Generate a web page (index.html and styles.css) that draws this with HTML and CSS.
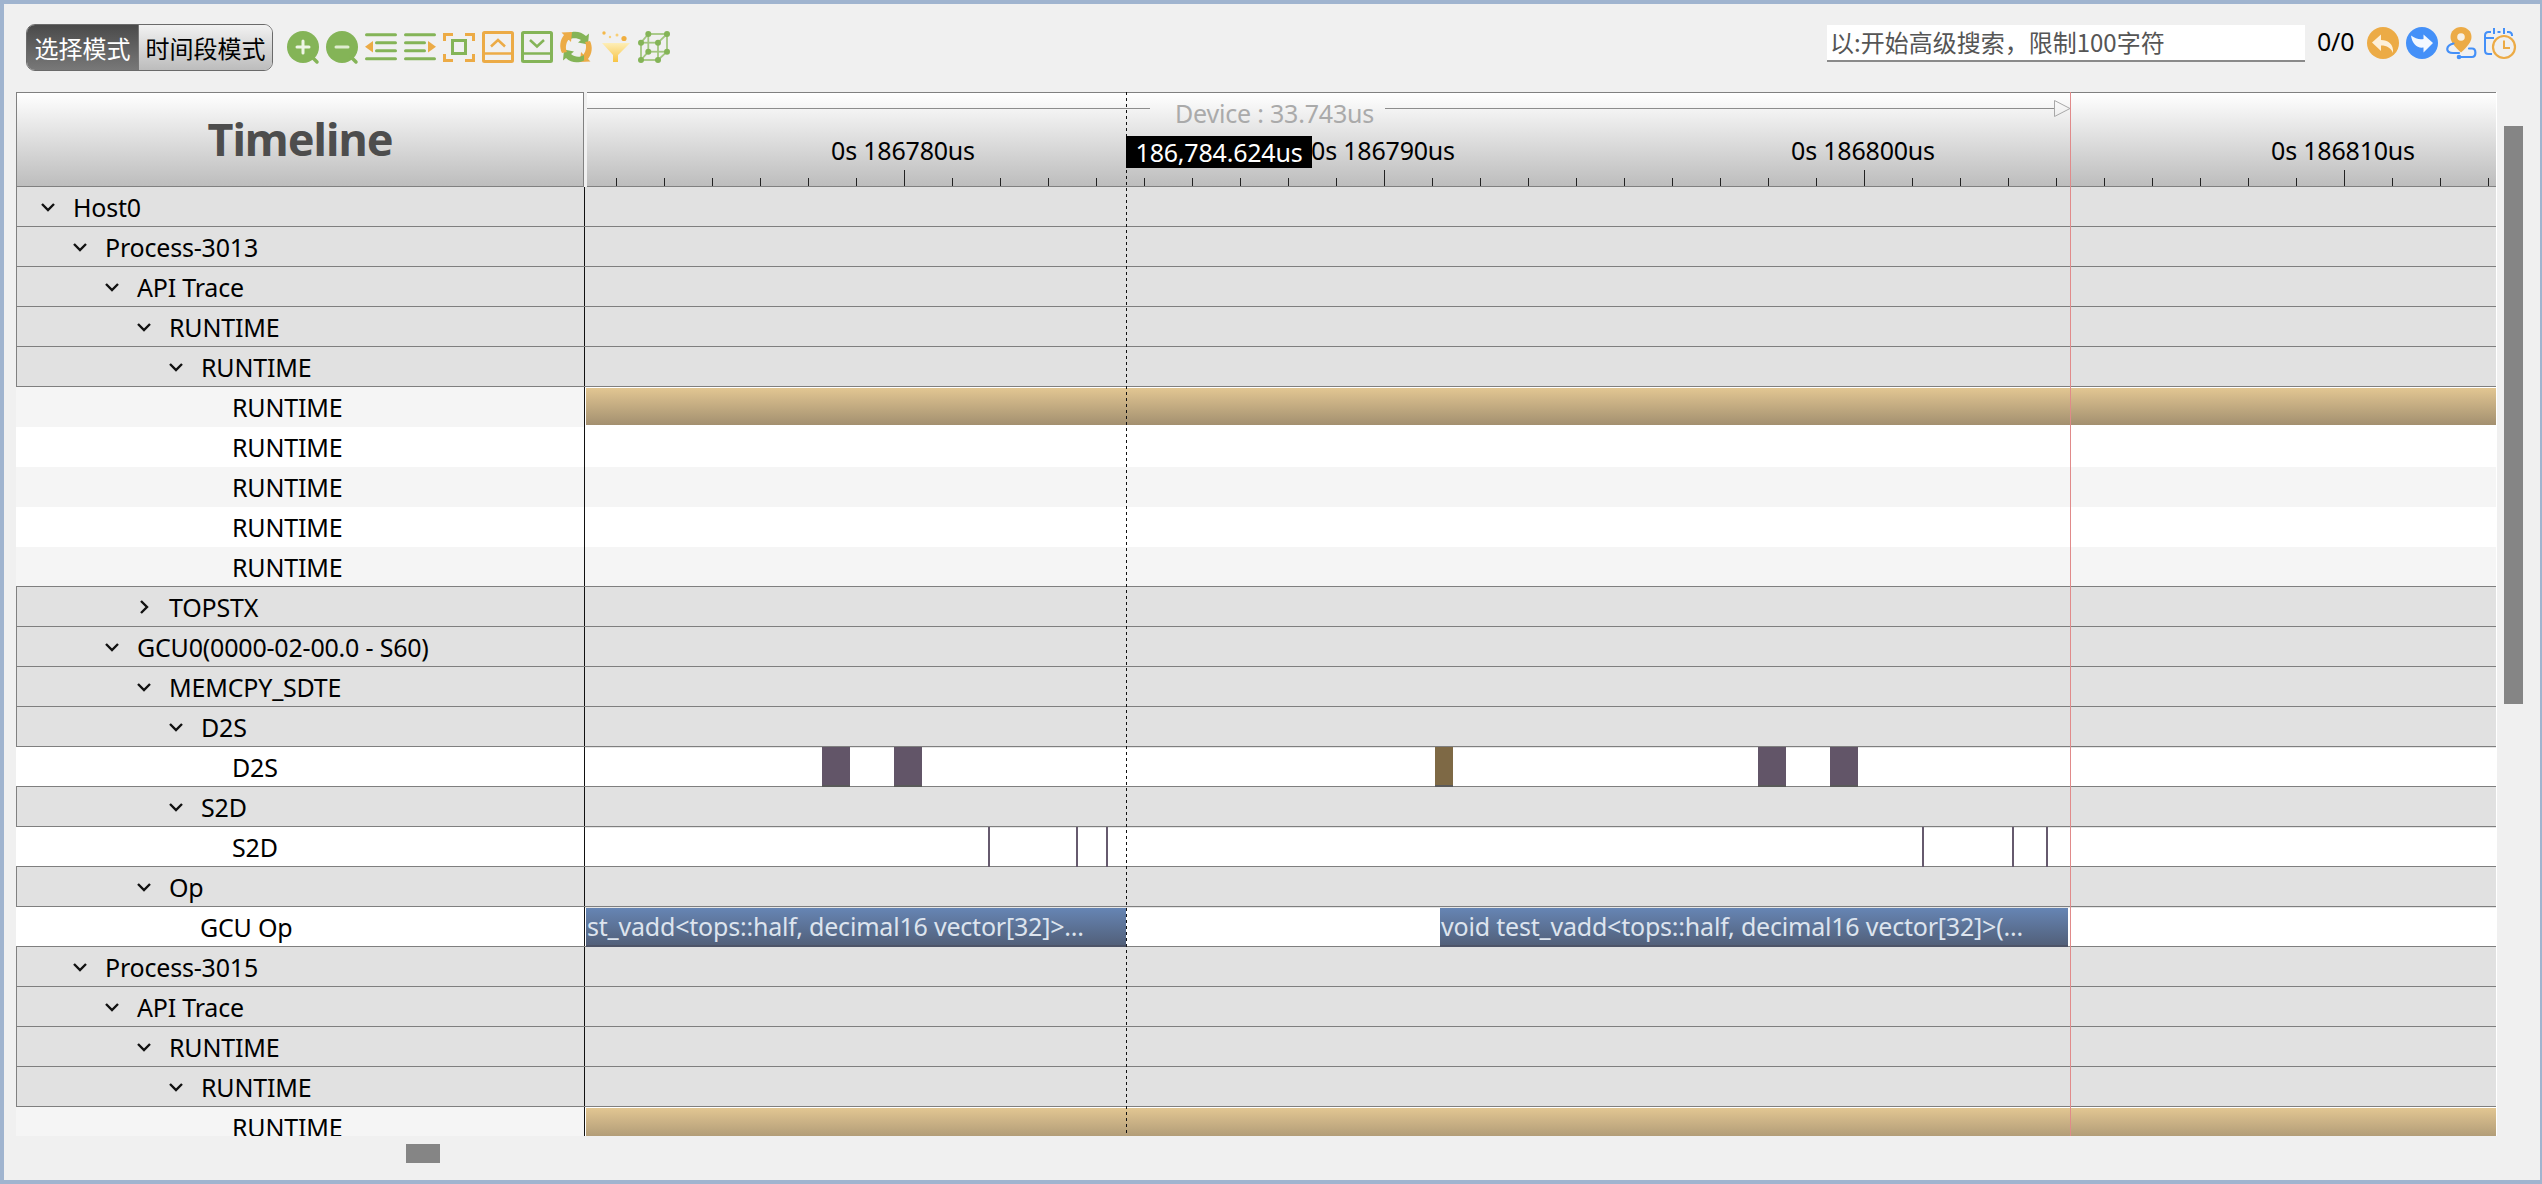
FILE: index.html
```html
<!DOCTYPE html>
<html lang="zh">
<head>
<meta charset="utf-8">
<title>Timeline</title>
<link rel="stylesheet" href="styles.css">
</head>
<body>
<div class="window">
  <header class="toolbar">
    <div class="mode-switch">
      <button class="mode mode-on">选择模式</button>
      <button class="mode mode-off">时间段模式</button>
    </div>
    <div class="tools">
      <svg class="ic" viewBox="0 0 32 32"><circle cx="16" cy="16" r="16" fill="#84b457"/><path d="M25 26l5 5" stroke="#84b457" stroke-width="3.5" stroke-linecap="round"/><path d="M10 16h12M16 10v12" stroke="#eef5e6" stroke-width="3" stroke-linecap="round"/></svg>
      <svg class="ic" viewBox="0 0 32 32"><circle cx="16" cy="16" r="16" fill="#84b457"/><path d="M25 26l5 5" stroke="#84b457" stroke-width="3.5" stroke-linecap="round"/><path d="M10 16h12" stroke="#dfeccf" stroke-width="3" stroke-linecap="round"/></svg>
      <svg class="ic" viewBox="0 0 32 32"><path d="M1.500 3.700h29M11.500 11.700h19M11.500 19.700h19M1.500 27.700h29" stroke="#84b457" stroke-width="3" stroke-linecap="round"/><path d="M0 15.700 8 10v11.500z" fill="#ecab46"/></svg>
      <svg class="ic" viewBox="0 0 32 32"><path d="M1.500 3.700h29M1.500 11.700h19M1.500 19.700h19M1.500 27.700h29" stroke="#84b457" stroke-width="3" stroke-linecap="round"/><path d="M32 15.700 24 10v11.500z" fill="#ecab46"/></svg>
      <svg class="ic" viewBox="0 0 32 32"><path d="M1.500 10V3.500H10M22 3.500h8.500V10M1.500 23v6.500H10M22 29.500h8.500V23" fill="none" stroke="#ecab46" stroke-width="3"/><rect x="9.500" y="9.500" width="13" height="13" fill="none" stroke="#84b457" stroke-width="3"/></svg>
      <svg class="ic" viewBox="0 0 32 32"><rect x="1.500" y="1.500" width="29" height="29" rx="1" fill="none" stroke="#ecab46" stroke-width="3"/><path d="M1.500 22.500h29" stroke="#ecab46" stroke-width="2.500"/><path d="M9 15.500l7-6.500 7 6.500" fill="none" stroke="#ecab46" stroke-width="2.500"/></svg>
      <svg class="ic" viewBox="0 0 32 32"><rect x="1.500" y="1.500" width="29" height="29" rx="1" fill="none" stroke="#84b457" stroke-width="3"/><path d="M1.500 22.500h29" stroke="#84b457" stroke-width="2.500"/><path d="M9 9l7 6.500L23 9" fill="none" stroke="#84b457" stroke-width="2.500"/></svg>
      <svg class="ic" viewBox="0 0 32 32"><path d="M8 2.500C14 -.5 21 .5 26 5l3-2.500-1 11-10-2 3-2.500C17 6.500 12 6.500 8 9z" fill="#84b457"/><path d="M30 10c3 6 2 13-2 18l2.500 2.500L20 31l1-10 2.500 2.500C26 20 27 15 25 11z" fill="#ecab46"/><path d="M24 29.500C18 32.500 11 32 6 27l-3 2.500 1-11 10 2-3 2.500c4 3.500 9 3.500 13 1z" fill="#84b457"/><path d="M2 22C-1 16 0 9 4 4L1.500 1.500 12 1l-1 10-2.500-2.500C6 12 5 17 7 21z" fill="#ecab46"/></svg>
      <svg class="ic" viewBox="0 0 32 32"><defs><linearGradient id="fun" x1="0" y1="0" x2="0" y2="1"><stop offset="0" stop-color="#fdeeb8"/><stop offset="1" stop-color="#f8c443"/></linearGradient></defs><path d="M3 12h28L19 24v7h-5v-7z" fill="url(#fun)"/><circle cx="5" cy="2" r="1.700" fill="#f4b84a"/><circle cx="11" cy="6" r="1.200" fill="#f8cf75"/><circle cx="18" cy="4" r="1.500" fill="#f8cf75"/><circle cx="25" cy="7.500" r="2.600" fill="#f0ae3e"/></svg>
      <svg class="ic" viewBox="0 0 32 32"><g fill="none" stroke="#a2c67f" stroke-width="1.800"><rect x="3" y="11.700" width="17" height="17.300"/><rect x="10.300" y="3" width="18.700" height="17.700"/><path d="M3 11.700 10.300 3M20 11.700 29 3M3 29l7.300-8.300M20 29l9-8.300"/></g><g fill="#84b457"><circle cx="3" cy="11.700" r="3"/><circle cx="20" cy="11.700" r="3"/><circle cx="3" cy="29" r="3"/><circle cx="20" cy="29" r="3"/><circle cx="10.300" cy="3" r="3"/><circle cx="29" cy="3" r="3"/><circle cx="10.300" cy="20.700" r="3"/><circle cx="29" cy="20.700" r="3"/></g></svg>
    </div>
    <div class="search">
      <div class="search-box">以:开始高级搜索，限制100字符</div>
      <span class="count">0/0</span>
      <svg class="ic ic-prev" viewBox="0 0 32 32"><circle cx="16" cy="16" r="16" fill="#ecab46"/><path d="M5 15.500 14 7.500v5.500c7 0 13 4 12 13-2-5-6-7.500-12-7.500v5.500z" fill="#fdf0da"/></svg>
      <svg class="ic ic-next" viewBox="0 0 32 32"><circle cx="16" cy="16" r="16" fill="#4490f8"/><path d="M27 16 17.500 7.500V12c-4 1-8.500-.5-12.500-3.500 1 8 6 13 12.500 12v5z" fill="#f3f8ff"/></svg>
      <svg class="ic ic-pin" viewBox="0 0 32 32"><path d="M16 0c6 0 10.500 4.400 10.500 10 0 5-4.500 10-10.500 15.500C10 20 5.500 15 5.500 10 5.500 4.400 10 0 16 0z" fill="#ecab46"/><circle cx="16" cy="10" r="3.800" fill="#f7f1e6"/><path d="M8.500 16.500C.5 18.500 0 26 8 26h6M24 21.500h3c4.500 0 4.500 8.500 0 8.500H14" fill="none" stroke="#4490f8" stroke-width="2.200" stroke-linecap="round"/><circle cx="14" cy="30" r="2.300" fill="#4490f8"/></svg>
      <svg class="ic ic-cal" viewBox="0 0 32 32"><path d="M7 5H4.500Q1 5 1 8.500v15Q1 27 4.500 27H8M13.500 5h3M23 5h1.500Q28 5 28 8.500V9M1 11h9M10 1v6M20 1v6" fill="none" stroke="#4490f8" stroke-width="2"/><circle cx="20" cy="20" r="11" fill="#f0f0f0" stroke="#ecab46" stroke-width="2.200"/><path d="M20 13.500V21h6" fill="none" stroke="#ecab46" stroke-width="2"/></svg>
    </div>
  </header>

  <div class="workspace">
    <main class="timeline">
      <div class="head">
        <div class="title">Timeline</div>
        <div class="ruler">
          <svg class="span-arrow" width="1909" height="95" viewBox="587 92 1909 95">
            <path d="M587 108.500H1150M1385 108.500H2055" stroke="#8c8c8c" stroke-width="1"/>
            <path d="M2054.500 100.500 2070 108.500 2054.500 116.500z" fill="none" stroke="#a8a8a8" stroke-width="1"/>
            <path class="tick-marks" d="M616.500 178V186M664.500 178V186M712.500 178V186M760.500 178V186M808.500 178V186M856.500 178V186M904.500 170V186M952.500 178V186M1000.500 178V186M1048.500 178V186M1096.500 178V186M1144.500 178V186M1192.500 178V186M1240.500 178V186M1288.500 178V186M1336.500 178V186M1384.500 170V186M1432.500 178V186M1480.500 178V186M1528.500 178V186M1576.500 178V186M1624.500 178V186M1672.500 178V186M1720.500 178V186M1768.500 178V186M1816.500 178V186M1864.500 170V186M1912.500 178V186M1960.500 178V186M2008.500 178V186M2056.500 178V186M2104.500 178V186M2152.500 178V186M2200.500 178V186M2248.500 178V186M2296.500 178V186M2344.500 170V186M2392.500 178V186M2440.500 178V186M2488.500 178V186"/>
          </svg>
          <span class="span-label">Device : 33.743us</span>
          <span class="tick-label" style="left:316px">0s 186780us</span>
          <span class="tick-label" style="left:796px">0s 186790us</span>
          <span class="tick-label" style="left:1276px">0s 186800us</span>
          <span class="tick-label" style="left:1756px">0s 186810us</span>
        </div>
      </div>

      <div class="row group"><div class="label l0"><svg class="chev" viewBox="0 0 14 8"><path d="M1 1l6 6 6-6"/></svg>Host0</div><div class="track"></div></div>
      <div class="row group"><div class="label l1"><svg class="chev" viewBox="0 0 14 8"><path d="M1 1l6 6 6-6"/></svg>Process-3013</div><div class="track"></div></div>
      <div class="row group"><div class="label l2"><svg class="chev" viewBox="0 0 14 8"><path d="M1 1l6 6 6-6"/></svg>API Trace</div><div class="track"></div></div>
      <div class="row group"><div class="label l3"><svg class="chev" viewBox="0 0 14 8"><path d="M1 1l6 6 6-6"/></svg>RUNTIME</div><div class="track"></div></div>
      <div class="row group"><div class="label l4"><svg class="chev" viewBox="0 0 14 8"><path d="M1 1l6 6 6-6"/></svg>RUNTIME</div><div class="track"></div></div>
      <div class="row soft"><div class="label l5"><span class="chev"></span>RUNTIME</div><div class="track"><div class="band"></div></div></div>
      <div class="row plain"><div class="label l5"><span class="chev"></span>RUNTIME</div><div class="track"></div></div>
      <div class="row soft"><div class="label l5"><span class="chev"></span>RUNTIME</div><div class="track"></div></div>
      <div class="row plain"><div class="label l5"><span class="chev"></span>RUNTIME</div><div class="track"></div></div>
      <div class="row soft ruled"><div class="label l5"><span class="chev"></span>RUNTIME</div><div class="track"></div></div>
      <div class="row group"><div class="label l3"><svg class="chev" viewBox="0 0 14 14"><path d="M4 1l6 6-6 6"/></svg>TOPSTX</div><div class="track"></div></div>
      <div class="row group"><div class="label l2"><svg class="chev" viewBox="0 0 14 8"><path d="M1 1l6 6 6-6"/></svg>GCU0(0000-02-00.0 - S60)</div><div class="track"></div></div>
      <div class="row group"><div class="label l3"><svg class="chev" viewBox="0 0 14 8"><path d="M1 1l6 6 6-6"/></svg>MEMCPY_SDTE</div><div class="track"></div></div>
      <div class="row group"><div class="label l4"><svg class="chev" viewBox="0 0 14 8"><path d="M1 1l6 6 6-6"/></svg>D2S</div><div class="track"></div></div>
      <div class="row plain ruled"><div class="label l5"><span class="chev"></span>D2S</div><div class="track">
        <div class="ev ev-purple" style="left:237px;width:28px"></div>
        <div class="ev ev-purple" style="left:309px;width:28px"></div>
        <div class="ev ev-brown" style="left:850px;width:18px"></div>
        <div class="ev ev-purple" style="left:1173px;width:28px"></div>
        <div class="ev ev-purple" style="left:1245px;width:28px"></div>
      </div></div>
      <div class="row group"><div class="label l4"><svg class="chev" viewBox="0 0 14 8"><path d="M1 1l6 6 6-6"/></svg>S2D</div><div class="track"></div></div>
      <div class="row plain ruled"><div class="label l5"><span class="chev"></span>S2D</div><div class="track">
        <div class="ev-line" style="left:403px"></div>
        <div class="ev-line" style="left:491px"></div>
        <div class="ev-line" style="left:521px"></div>
        <div class="ev-line" style="left:1337px"></div>
        <div class="ev-line" style="left:1427px"></div>
        <div class="ev-line" style="left:1461px"></div>
      </div></div>
      <div class="row group"><div class="label l3"><svg class="chev" viewBox="0 0 14 8"><path d="M1 1l6 6 6-6"/></svg>Op</div><div class="track"></div></div>
      <div class="row plain ruled"><div class="label l4"><span class="chev"></span>GCU Op</div><div class="track">
        <div class="op" style="left:1px;width:540px">st_vadd&lt;tops::half, decimal16 vector[32]&gt;...</div>
        <div class="op" style="left:855px;width:628px">void test_vadd&lt;tops::half, decimal16 vector[32]&gt;(...</div>
      </div></div>
      <div class="row group"><div class="label l1"><svg class="chev" viewBox="0 0 14 8"><path d="M1 1l6 6 6-6"/></svg>Process-3015</div><div class="track"></div></div>
      <div class="row group"><div class="label l2"><svg class="chev" viewBox="0 0 14 8"><path d="M1 1l6 6 6-6"/></svg>API Trace</div><div class="track"></div></div>
      <div class="row group"><div class="label l3"><svg class="chev" viewBox="0 0 14 8"><path d="M1 1l6 6 6-6"/></svg>RUNTIME</div><div class="track"></div></div>
      <div class="row group"><div class="label l4"><svg class="chev" viewBox="0 0 14 8"><path d="M1 1l6 6 6-6"/></svg>RUNTIME</div><div class="track"></div></div>
      <div class="row soft"><div class="label l5"><span class="chev"></span>RUNTIME</div><div class="track"><div class="band"></div></div></div>

      <div class="cursor"></div>
      <div class="marker"></div>
      <div class="cursor-time">186,784.624us</div>
    </main>
    <div class="vscroll"><div class="vthumb"></div></div>
  </div>
  <div class="hscroll"><div class="hthumb"></div></div>
</div>
</body>
</html>
```

FILE: styles.css
```css
* { box-sizing: border-box; }
html, body { margin: 0; padding: 0; }
body {
  width: 2542px;
  height: 1184px;
  overflow: hidden;
  font-family: "Noto Sans", "Noto Sans CJK SC", sans-serif;
  font-size: 25px;
  letter-spacing: -0.2px;
  color: #000;
}
.window {
  width: 2542px;
  height: 1184px;
  background: #f0f0f0;
  border-style: solid;
  border-color: #a0b4cf;
  border-width: 4px 2px 4px 4px;
  padding-left: 12px;
}

/* toolbar */
.toolbar {
  height: 88px;
  padding-top: 20px;
  display: flex;
  align-items: flex-start;
}
.mode-switch {
  display: flex;
  margin-left: 10px;
  height: 47px;
  width: 247px;
  border: 1px solid #6a6a6a;
  border-radius: 9px;
  overflow: hidden;
}
.mode {
  border: 0;
  padding: 0;
  margin: 0;
  font-family: "Noto Sans CJK SC", sans-serif;
  font-size: 24px;
  height: 100%;
  line-height: 1;
}
.mode-on {
  width: 111px;
  color: #fff;
  background: linear-gradient(#4a4a4a, #787878);
}
.mode-off {
  flex: 1;
  color: #000;
  background: linear-gradient(#f2f2f2, #bcbcbc);
  border-left: 1px solid #777;
}
.tools {
  display: flex;
  gap: 7px;
  margin-left: 14px;
  margin-top: 7px;
}
.ic {
  width: 32px;
  height: 32px;
  flex: none;
  overflow: visible;
  display: block;
}
.search {
  margin-left: auto;
  display: flex;
  align-items: flex-start;
  margin-right: 24px;
}
.search-box {
  width: 478px;
  height: 37px;
  margin-top: 1px;
  padding-left: 3px;
  background: #fff;
  border-bottom: 2px solid #8a8a8a;
  font-family: "Noto Sans CJK SC", sans-serif;
  font-size: 24px;
  letter-spacing: 0;
  line-height: 34px;
  color: #555;
  white-space: nowrap;
}
.count {
  margin-left: 12px;
  width: 36px;
  line-height: 34px;
}
.ic-prev { margin-left: 14px; margin-top: 3px; }
.ic-next { margin-left: 7px; margin-top: 3px; }
.ic-pin { margin-left: 7px; margin-top: 3px; }
.ic-cal { margin-left: 7px; margin-top: 3px; }

/* workspace */
.workspace {
  display: flex;
  height: 1044px;
}
.timeline {
  position: relative;
  width: 2481px;
  height: 1044px;
  overflow: hidden;
  border-right: 1px solid #fff;
}
.head {
  display: flex;
  height: 95px;
}
.title {
  width: 568px;
  height: 95px;
  border: 1px solid #808080;
  background: linear-gradient(#fff, #bdbdbd);
  color: #4d4d4d;
  font-size: 45px;
  letter-spacing: -1px;
  font-weight: 700;
  text-align: center;
  line-height: 91px;
}
.ruler {
  position: relative;
  flex: 1;
  margin-left: 3px;
  height: 95px;
  border-top: 1px solid #808080;
  border-bottom: 1px solid #808080;
  background: linear-gradient(#fff, #bdbdbd);
  overflow: hidden;
}
.span-arrow { position: absolute; left: 0; top: -1px; }
.tick-marks { fill: none; stroke: #222; stroke-width: 1; }
.span-label {
  position: absolute;
  left: 588px;
  top: 4px;
  color: #aaa;
  line-height: 32px;
  white-space: nowrap;
}
.tick-label {
  position: absolute;
  top: 41px;
  width: 0;
  line-height: 32px;
  white-space: nowrap;
  display: flex;
  justify-content: center;
}

/* rows */
.row {
  display: flex;
  height: 40px;
}
.label {
  width: 569px;
  flex: none;
  display: flex;
  align-items: center;
  padding-top: 1px;
  border-right: 1px solid #111;
  white-space: nowrap;
  line-height: 1;
}
.l0 { padding-left: 24px; }
.l1 { padding-left: 56px; }
.l2 { padding-left: 88px; }
.l3 { padding-left: 120px; }
.l4 { padding-left: 152px; }
.l5 { padding-left: 184px; }
.chev {
  width: 14px;
  height: 8px;
  margin-right: 18px;
  flex: none;
  display: block;
  overflow: visible;
}
.chev path { fill: none; stroke: #111; stroke-width: 2.4; }
svg.chev[viewBox="0 0 14 14"] { height: 14px; }
.track {
  position: relative;
  flex: 1;
}
.group { border-bottom: 1px solid #7f7f7f; }
.group .label {
  background: #e1e1e1;
  border-left: 1px solid #808080;
}
.group .track { background: #e1e1e1; }
.plain .label, .plain .track { background: #fff; }
.soft .label { background: #f5f5f5; }
.soft .track { background: #fff; }
.soft + .plain + .soft .track, .soft + .plain + .soft + .plain + .soft .track { background: #f5f5f5; }
.ruled { border-bottom: 1px solid #7f7f7f; }
.plain.ruled .track { border-top: 1px solid #e6e6e6; }

.band {
  position: absolute;
  left: 1px;
  right: 0;
  top: 1px;
  height: 37px;
  background: linear-gradient(#e2c692, #a39070);
}
.ev {
  position: absolute;
  top: -1px;
  height: 40px;
  border-bottom: 2px solid #5a5a5a;
}
.ev-purple { background: #625568; }
.ev-brown { background: #7e6945; }
.ev-line {
  position: absolute;
  top: -1px;
  height: 40px;
  width: 2px;
  background: #665a6e;
}
.op {
  position: absolute;
  top: 0;
  height: 39px;
  padding-left: 1px;
  overflow: hidden;
  white-space: nowrap;
  color: #dde4ee;
  line-height: 36px;
  background: linear-gradient(#6685b4, #52607a);
  border-bottom: 2px solid #4d5468;
}

/* overlays */
.cursor {
  position: absolute;
  left: 1110px;
  top: 0;
  bottom: 0;
  width: 1px;
  background: repeating-linear-gradient(#111 0 3px, transparent 3px 6px);
}
.marker {
  position: absolute;
  left: 2054px;
  top: 0;
  bottom: 0;
  width: 1px;
  background: #e08a8a;
}
.cursor-time {
  position: absolute;
  left: 1110px;
  top: 44px;
  width: 186px;
  height: 32px;
  background: #000;
  color: #fff;
  text-align: center;
  line-height: 32px;
  white-space: nowrap;
}

/* scrollbars */
.vscroll {
  width: 19px;
  margin-left: 7px;
  flex: none;
}
.vthumb {
  margin-top: 34px;
  height: 578px;
  background: #858585;
}
.hscroll {
  padding-top: 8px;
  padding-left: 390px;
}
.hthumb {
  width: 34px;
  height: 19px;
  background: #858585;
}
```
